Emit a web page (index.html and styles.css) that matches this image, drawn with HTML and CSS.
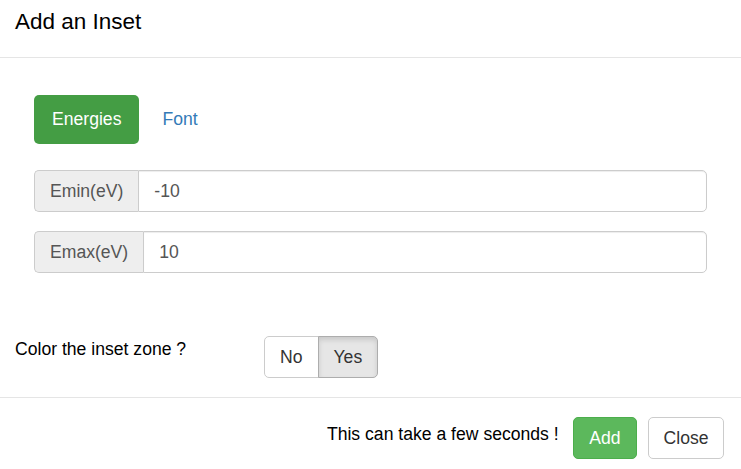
FILE: index.html
```html
<!DOCTYPE html>
<html lang="en">
<head>
<meta charset="utf-8">
<title>Add an Inset</title>
<link rel="stylesheet" href="styles.css">
</head>
<body>
<div class="modal">
  <div class="modal-header">
    <h4 class="modal-title">Add an Inset</h4>
  </div>
  <div class="modal-body">
    <ul class="nav-pills">
      <li class="active"><a href="#">Energies</a></li>
      <li><a href="#">Font</a></li>
    </ul>
    <div class="input-group">
      <span class="addon">Emin(eV)</span>
      <input class="form-control" type="text" value="-10">
    </div>
    <div class="input-group">
      <span class="addon">Emax(eV)</span>
      <input class="form-control" type="text" value="10">
    </div>
  </div>
  <div class="option-row">
    <label class="option-label">Color the inset zone ?</label>
    <div class="btn-group">
      <button class="btn">No</button>
      <button class="btn active">Yes</button>
    </div>
  </div>
  <div class="modal-footer">
    <span class="footer-note">This can take a few seconds !</span>
    <button class="btn btn-success">Add</button>
    <button class="btn btn-close">Close</button>
  </div>
</div>
</body>
</html>
```

FILE: styles.css
```css
html, body {
  margin: 0;
  padding: 0;
  background: #fff;
  overflow: hidden;
}
body {
  font-family: "Liberation Sans", Arial, sans-serif;
  font-size: 17.6px;
  line-height: 25px;
  color: #000;
}
.modal {
  width: 741px;
}
.modal-header {
  padding: 10px 15px 23px;
  border-bottom: 1px solid #e5e5e5;
}
.modal-title {
  margin: 0;
  font-size: 22.5px;
  line-height: 24px;
  font-weight: normal;
  color: #000;
}
.modal-body {
  padding: 37px 34px 0;
}
.nav-pills {
  list-style: none;
  margin: 0 0 26px;
  padding: 0;
  display: flex;
}
.nav-pills li + li {
  margin-left: 5px;
}
.nav-pills a {
  display: block;
  padding: 12px 18px;
  line-height: 25px;
  border-radius: 5px;
  color: #337ab7;
  text-decoration: none;
}
.nav-pills .active a {
  background: #449d44;
  color: #fff;
}
.input-group {
  display: flex;
  height: 42px;
  margin-bottom: 19px;
}
.addon {
  box-sizing: border-box;
  height: 42px;
  padding: 8px 15px;
  line-height: 25px;
  background: #eee;
  color: #555;
  border: 1px solid #ccc;
  border-right: 0;
  border-radius: 5px 0 0 5px;
  white-space: nowrap;
}
.form-control {
  flex: 1;
  box-sizing: border-box;
  height: 42px;
  margin: 0;
  padding: 7px 15px;
  font-family: inherit;
  font-size: 17.6px;
  line-height: 25px;
  color: #555;
  background: #fff;
  border: 1px solid #ccc;
  border-radius: 0 5px 5px 0;
  box-shadow: inset 0 1px 1px rgba(0, 0, 0, .075);
  outline: none;
}
.option-row {
  display: flex;
  align-items: flex-start;
  padding: 44px 15px 0;
}
.option-label {
  width: 249px;
  margin-top: 1px;
  line-height: 25px;
}
.btn-group {
  display: flex;
}
.btn {
  box-sizing: border-box;
  height: 42px;
  margin: 0;
  padding: 7px 15px;
  font-family: inherit;
  font-size: 17.6px;
  line-height: 25px;
  color: #333;
  background: #fff;
  border: 1px solid #ccc;
  border-radius: 5px;
  cursor: pointer;
}
.btn-group .btn:first-child {
  border-radius: 5px 0 0 5px;
}
.btn-group .btn:last-child {
  border-radius: 0 5px 5px 0;
  margin-left: -1px;
}
.btn.active {
  background: #e6e6e6;
  border-color: #adadad;
  box-shadow: inset 0 3px 5px rgba(0, 0, 0, .125);
}
.modal-footer {
  margin-top: 19px;
  border-top: 1px solid #e5e5e5;
  padding: 19px 17px 18px;
  display: flex;
  justify-content: flex-end;
  align-items: flex-start;
}
.footer-note {
  margin-top: 5px;
  margin-right: 14px;
  color: #000;
}
.btn-success {
  padding: 7px 15.5px;
  background: #5cb85c;
  border-color: #4cae4c;
  color: #fff;
  margin-right: 11px;
}
.btn-close {
  padding: 7px 14.5px;
}
```
